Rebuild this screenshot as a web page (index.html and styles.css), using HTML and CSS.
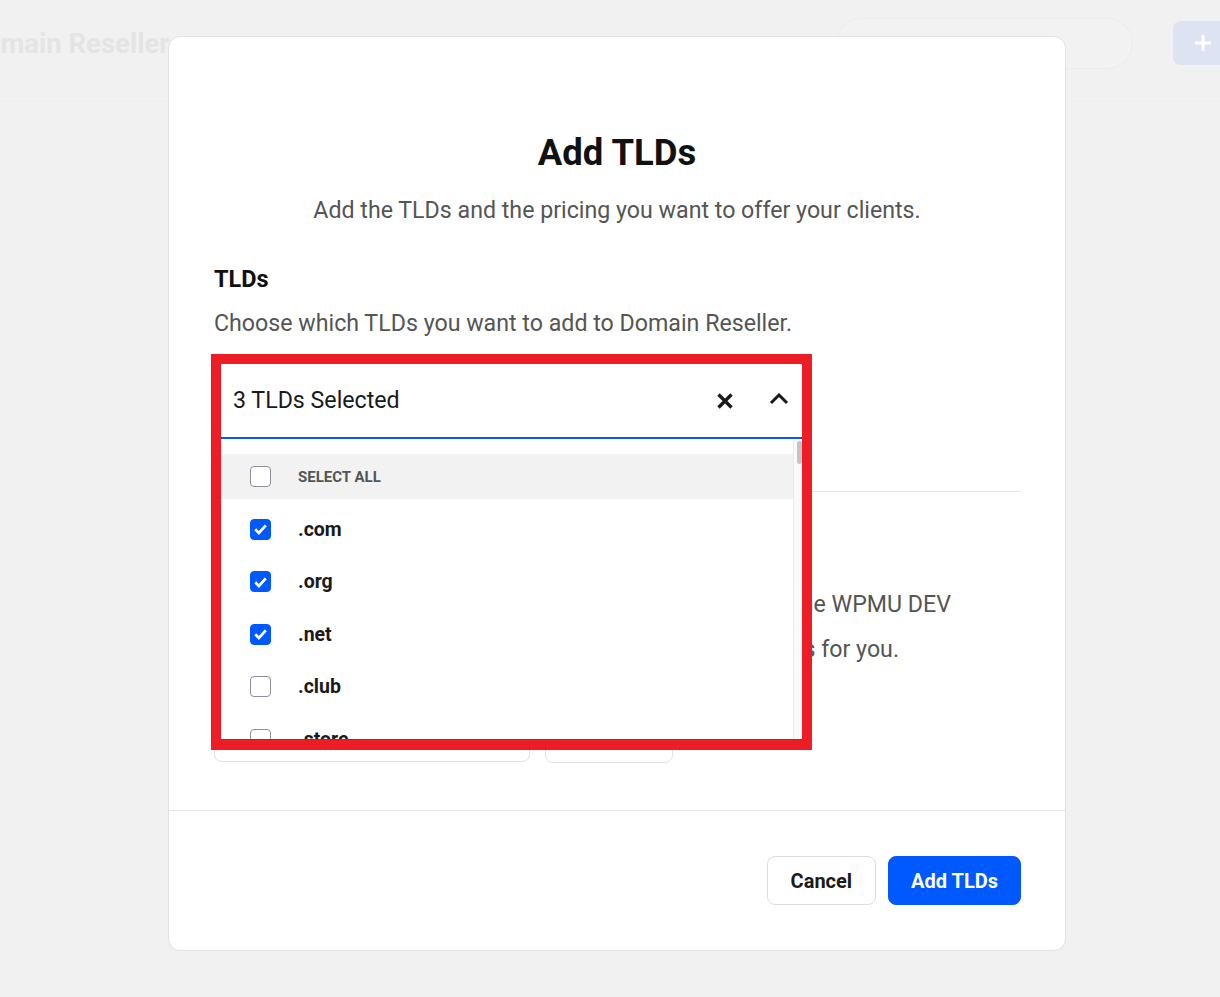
FILE: index.html
```html
<!DOCTYPE html>
<html lang="en">
<head>
<meta charset="utf-8">
<title>Add TLDs</title>
<link rel="stylesheet" href="styles.css">
</head>
<body>
<div class="page">
  <header class="topbar">
    <h1 class="page-title">Domain Reseller</h1>
    <div class="topbar-actions">
      <div class="search-pill"></div>
      <button class="add-btn" aria-label="Add">
        <svg width="18" height="18" viewBox="0 0 18 18"><path d="M9 1v16M1 9h16" stroke="#fff" stroke-width="3" fill="none"/></svg>
      </button>
    </div>
  </header>
</div>

<div class="overlay">
  <div class="modal">
    <div class="modal-body">
      <h2 class="modal-title">Add TLDs</h2>
      <p class="modal-sub">Add the TLDs and the pricing you want to offer your clients.</p>

      <h3 class="section-title">TLDs</h3>
      <p class="section-desc">Choose which TLDs you want to add to Domain Reseller.</p>

      <div class="select">
        <div class="select-field">
          <span class="select-value">3 TLDs Selected</span>
          <span class="select-icons">
            <svg class="icon-x" width="18" height="18" viewBox="0 0 18 18"><path d="M2.5 2.5l13 13M15.5 2.5l-13 13" stroke="#1a1a1a" stroke-width="3.4" fill="none"/></svg>
            <svg class="icon-chev" width="20" height="12" viewBox="0 0 20 12"><path d="M2 10l8-8 8 8" stroke="#1a1a1a" stroke-width="3" fill="none"/></svg>
          </span>
        </div>
        <div class="dropdown">
          <div class="dropdown-list">
            <div class="option option-all"><span class="cb"></span><span class="opt-label all-label">Select All</span></div>
            <div class="option"><span class="cb cb-on"><svg width="20" height="20" viewBox="0 0 20 20"><path d="M4.5 10.3l3.8 3.8L15.6 6.2" stroke="#fff" stroke-width="2.9" fill="none"/></svg></span><span class="opt-label">.com</span></div>
            <div class="option"><span class="cb cb-on"><svg width="20" height="20" viewBox="0 0 20 20"><path d="M4.5 10.3l3.8 3.8L15.6 6.2" stroke="#fff" stroke-width="2.9" fill="none"/></svg></span><span class="opt-label">.org</span></div>
            <div class="option"><span class="cb cb-on"><svg width="20" height="20" viewBox="0 0 20 20"><path d="M4.5 10.3l3.8 3.8L15.6 6.2" stroke="#fff" stroke-width="2.9" fill="none"/></svg></span><span class="opt-label">.net</span></div>
            <div class="option"><span class="cb"></span><span class="opt-label">.club</span></div>
            <div class="option"><span class="cb"></span><span class="opt-label">.store</span></div>
          </div>
          <div class="scrollbar"><div class="thumb"></div></div>
        </div>
      </div>

      <hr class="divider">

      <h3 class="section-title pricing-title">Pricing</h3>
      <p class="price-line line-1">Domains are registered and renewed through the WPMU DEV</p>
      <p class="price-line line-2">registrar, which handles the renewals for you.</p>

      <div class="inputs">
        <div class="input input-wide"></div>
        <div class="input input-small"></div>
      </div>
    </div>
    <div class="modal-footer">
      <button class="btn btn-ghost">Cancel</button>
      <button class="btn btn-primary">Add TLDs</button>
    </div>
    <div class="annotation"></div>
  </div>
</div>
</body>
</html>
```

FILE: styles.css
```css
* { box-sizing: border-box; }

html, body {
  margin: 0;
  padding: 0;
  width: 1220px;
  height: 997px;
  overflow: hidden;
  background: #f1f1f1;
  font-family: Roboto, "Liberation Sans", sans-serif;
}

.page {
  height: 997px;
}

.topbar {
  height: 99px;
  border-bottom: 1px solid #f4f4f4;
  display: flex;
  justify-content: space-between;
  align-items: flex-start;
}

.page-title {
  margin: 28px 0 0 -33px;
  font-size: 27.5px;
  line-height: 32px;
  font-weight: 700;
  color: #e4e4e4;
  white-space: nowrap;
}

.topbar-actions {
  display: flex;
  align-items: flex-start;
  gap: 40px;
  margin-right: -13px;
  padding-top: 18px;
}

.search-pill {
  width: 297px;
  height: 51px;
  border-radius: 26px;
  background: #f2f2f2;
  border: 1px solid #ececec;
}

.add-btn {
  margin-top: 3px;
  width: 60px;
  height: 44px;
  border: none;
  border-radius: 8px;
  background: #dde3f3;
  display: flex;
  align-items: center;
  padding-left: 21px;
}

.overlay {
  position: absolute;
  left: 0;
  top: 0;
  width: 1220px;
  height: 997px;
  padding: 36px 0 0 168px;
}

.modal {
  position: relative;
  width: 898px;
  background: #fff;
  border: 1px solid #e2e2e2;
  border-radius: 12px;
}

.modal-body {
  padding: 94px 45px 47px;
}

.modal-title {
  margin: 0;
  text-align: center;
  font-size: 36.5px;
  line-height: 43px;
  font-weight: 700;
  color: #111;
}

.modal-sub {
  margin: 21px 0 0;
  text-align: center;
  font-size: 23.2px;
  line-height: 30px;
  color: #555;
}

.section-title {
  margin: 39px 0 0;
  font-size: 23.5px;
  line-height: 30px;
  font-weight: 700;
  color: #111;
}

.section-desc {
  margin: 14px 0 0;
  font-size: 23.2px;
  line-height: 30px;
  color: #555;
}

.select {
  position: relative;
  margin-top: 24px;
  width: 589px;
}

.select-field {
  height: 77px;
  border-bottom: 2px solid #0059ff;
  display: flex;
  align-items: center;
  justify-content: space-between;
  padding: 0 14px 0 19px;
  background: #fff;
}

.select-value {
  font-size: 23.2px;
  color: #1a1a1a;
}

.select-icons {
  display: flex;
  align-items: center;
  gap: 35px;
}

.icon-x { margin-top: 2px; }
.icon-chev { margin-top: -2px; }

.dropdown {
  position: absolute;
  top: 100%;
  left: 0;
  right: 0;
  height: 301px;
  background: #fff;
  border-bottom: 1px solid #0059ff;
  display: flex;
  z-index: 2;
}

.dropdown-list {
  flex: 1;
  overflow: hidden;
  padding-top: 15px;
}

.option {
  height: 52.5px;
  display: flex;
  align-items: center;
  padding-left: 36px;
  gap: 27px;
}

.option-all {
  height: 45px;
  background: #f2f2f2;
  margin-bottom: 4px;
}

.cb {
  width: 21px;
  height: 21px;
  border-radius: 4px;
  border: 1px solid #8e8e9c;
  background: #fff;
  display: flex;
  align-items: center;
  justify-content: center;
  flex-shrink: 0;
}

.cb-on {
  background: #0059ff;
  border-color: #0059ff;
}

.opt-label {
  font-size: 19.5px;
  font-weight: 700;
  color: #1a1a1a;
}

.all-label {
  font-size: 15px;
  text-transform: uppercase;
  color: #555;
}

.scrollbar {
  width: 10px;
  background: #fafafa;
  border-left: 1px solid #ebebeb;
  padding: 2px 1px 0 3px;
}

.thumb {
  height: 23px;
  border-radius: 3px;
  background: #c4c4c4;
}

.divider {
  margin: 52px 0 0;
  border: none;
  border-top: 1px solid #e4e4e4;
  height: 0;
}

.pricing-title {
  margin-top: 40px;
}

.price-line {
  margin: 0;
  font-size: 23.2px;
  line-height: 30px;
  color: #555;
  text-align: right;
  white-space: nowrap;
}

.line-1 {
  margin-top: 27px;
  width: 737px;
}

.line-2 {
  margin-top: 15px;
  width: 685px;
}

.inputs {
  margin-top: 50px;
  display: flex;
  gap: 15px;
}

.input {
  height: 48px;
  border: 1px solid #e2e2e2;
  border-radius: 8px;
}

.input-wide { width: 316px; }
.input-small { width: 128px; height: 49px; }

.modal-footer {
  border-top: 1px solid #e4e4e4;
  padding: 45px 44px 45px;
  display: flex;
  justify-content: flex-end;
  gap: 12px;
}

.btn {
  height: 49px;
  border-radius: 8px;
  font-family: Roboto, "Liberation Sans", sans-serif;
  font-size: 20px;
  font-weight: 700;
  padding: 0 23px;
  cursor: pointer;
}

.btn-ghost {
  background: #fff;
  border: 1px solid #dedede;
  color: #1a1a1a;
}

.btn-primary {
  background: #0059ff;
  border: 1px solid #0059ff;
  color: #fff;
  padding: 0 22px;
}

.annotation {
  position: absolute;
  left: 42px;
  top: 317px;
  width: 601px;
  height: 396px;
  border: 10px solid #ee1c25;
  z-index: 5;
  pointer-events: none;
}
```
